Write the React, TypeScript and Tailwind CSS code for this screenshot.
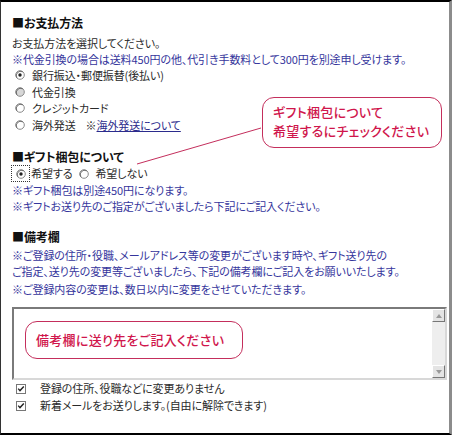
const jp = "font-['Noto_Sans_CJK_JP','Noto_Sans',sans-serif] [font-feature-settings:'palt']";

function Radio({ checked, gray }: { checked?: boolean; gray?: boolean }) {
  return (
    <svg width="10" height="10" viewBox="0 0 10 10" className="shrink-0">
      <circle cx="5" cy="5" r="4.3" fill={gray ? "#d8d8d8" : "#fff"} stroke="#8a8a8a" strokeWidth="1" />
      <path d="M1.8 7.6 A4.3 4.3 0 0 1 7.6 1.8" fill="none" stroke="#555" strokeWidth="0.8" />
      {checked && <circle cx="5" cy="5" r="1.7" fill="#222" />}
    </svg>
  );
}

function Check() {
  return (
    <svg width="10" height="10" viewBox="0 0 10 10" className="shrink-0">
      <rect x="0.5" y="0.5" width="9" height="9" fill="#fff" stroke="#777" />
      <path d="M2.2 4.6 L4 6.6 L7.8 2.6" fill="none" stroke="#222" strokeWidth="1.4" />
    </svg>
  );
}

function Arrow({ up }: { up?: boolean }) {
  return (
    <div className="w-[13px] h-[13px] bg-[#e4e4e4] border border-t-white border-l-white border-r-[#777] border-b-[#777] flex items-center justify-center">
      <svg width="6" height="4" viewBox="0 0 6 4">
        <path d={up ? "M0 4 L3 0 L6 4 Z" : "M0 0 L3 4 L6 0 Z"} fill="#999" />
      </svg>
    </div>
  );
}

export default function App() {
  const blue = "text-[#35359c]";
  const head = "h-[16px] leading-[16px] text-[12px] font-bold text-[#111]";
  return (
    <div
      className={`relative w-[452px] h-[435px] bg-white border-t-2 border-b-2 border-l border-r-[3px] border-t-black border-b-black border-l-[#333] border-r-[#8c8c8c] pl-[11px] pt-[13px] text-[11px] tracking-[-0.1px] text-[#2a2a2a] ${jp}`}
    >
      <div className={head}>■お支払方法</div>
      <div className="mt-[4px] h-[16px] leading-[16px]">お支払方法を選択してください。</div>
      <div className={`h-[16px] leading-[16px] ${blue}`}>
        ※代金引換の場合は送料450円の他、代引き手数料として300円を別途申し受けます。
      </div>
      {[
        { label: "銀行振込・郵便振替(後払い)", checked: true },
        { label: "代金引換", gray: true },
        { label: "クレジットカード" },
      ].map((r) => (
        <div key={r.label} className="h-[16.5px] flex items-center gap-[7px] pl-[3px]">
          <Radio checked={r.checked} gray={r.gray} />
          <span>{r.label}</span>
        </div>
      ))}
      <div className="h-[16.5px] flex items-center gap-[7px] pl-[3px]">
        <Radio />
        <span>海外発送</span>
        <span className="ml-[3px]">
          ※<a className="text-[#2b2b8c] underline">海外発送について</a>
        </span>
      </div>

      <div className={`mt-[16px] ${head}`}>■ギフト梱包について</div>
      <div className="h-[17px] flex items-center">
        <div className="-ml-[1px] w-[19px] h-[17px] border border-dotted border-[#333] flex items-center justify-center">
          <Radio checked />
        </div>
        <span className="ml-[1px]">希望する</span>
        <span className="ml-[7px]">
          <Radio />
        </span>
        <span className="ml-[6px]">希望しない</span>
      </div>
      <div className={`h-[16px] leading-[16px] ${blue}`}>※ギフト梱包は別途450円になります。</div>
      <div className={`h-[16px] leading-[16px] ${blue}`}>
        ※ギフトお送り先のご指定がございましたら下記にご記入ください。
      </div>

      <div className={`mt-[15px] ${head}`}>■備考欄</div>
      <div className={`mt-[2px] h-[16px] leading-[16px] ${blue}`}>
        ※ご登録の住所・役職、メールアドレス等の変更がございます時や、ギフト送り先の
      </div>
      <div className={`h-[16px] leading-[16px] ${blue}`}>
        ご指定、送り先の変更等ございましたら、下記の備考欄にご記入をお願いいたします。
      </div>
      <div className={`mt-[2px] h-[16px] leading-[16px] ${blue}`}>
        ※ご登録内容の変更は、数日以内に変更をさせていただきます。
      </div>

      <div className="relative mt-[10px] w-[435px] h-[73px] flex border-2 border-t-[#7a7a7a] border-l-[#7a7a7a] border-r-[#d8d8d8] border-b-[#d8d8d8] bg-white">
        <div className="flex-1" />
        <div className="w-[13px] flex flex-col bg-[#eeeeee]">
          <Arrow up />
          <div className="flex-1" />
          <Arrow />
        </div>
        <div className="absolute left-[11px] top-[12px] w-[218px] h-[38px] rounded-[12px] border-[1.5px] border-[#c42e5c] flex items-center pl-[10px] text-[13px] font-medium tracking-[0.3px] text-[#d0164c]">
          備考欄に送り先をご記入ください
        </div>
      </div>

      <div className="h-[17px] flex items-center gap-[14px] pl-[4px]">
        <Check />
        <span>登録の住所、役職などに変更ありません</span>
      </div>
      <div className="h-[17px] flex items-center gap-[14px] pl-[4px]">
        <Check />
        <span>新着メールをお送りします。(自由に解除できます)</span>
      </div>

      <svg className="absolute inset-0 pointer-events-none" width="449" height="431">
        <line x1="260" y1="126" x2="136" y2="162" stroke="#c42e5c" strokeWidth="1" />
      </svg>
      <div className="absolute left-[261px] top-[95px] w-[180px] h-[51px] rounded-[12px] border-[1.5px] border-[#c42e5c] bg-white pl-[10px] pt-[4px] text-[13px] leading-[19px] font-medium tracking-[0.3px] text-[#d0164c]">
        <div>ギフト梱包について</div>
        <div>希望するにチェックください</div>
      </div>
    </div>
  );
}
